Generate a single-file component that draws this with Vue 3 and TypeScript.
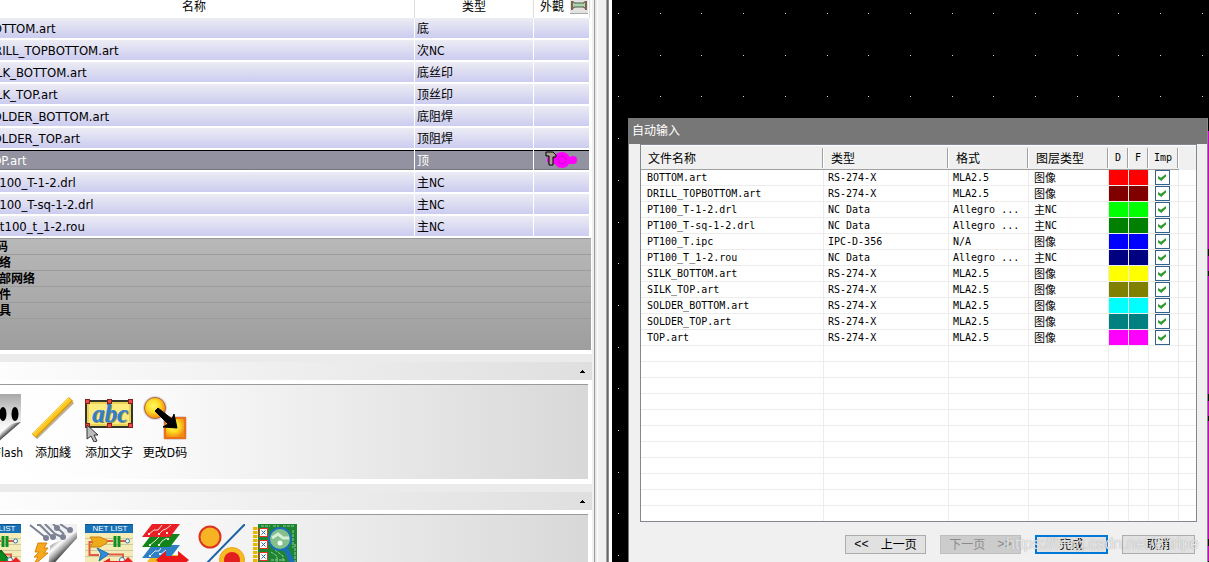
<script setup lang="ts">
interface Layer {
  name: string
  cjk: string
  latin?: string
  selected?: boolean
}

interface ImportFile {
  name: string
  type: string
  format: string
  cjk: string
  latin?: string
  color: string
}

const layers: Layer[] = [
  { name: 'BOTTOM.art', cjk: '底' },
  { name: 'DRILL_TOPBOTTOM.art', cjk: '次', latin: 'NC' },
  { name: 'SILK_BOTTOM.art', cjk: '底丝印' },
  { name: 'SILK_TOP.art', cjk: '顶丝印' },
  { name: 'SOLDER_BOTTOM.art', cjk: '底阻焊' },
  { name: 'SOLDER_TOP.art', cjk: '顶阻焊' },
  { name: 'TOP.art', cjk: '顶', selected: true },
  { name: 'PT100_T-1-2.drl', cjk: '主', latin: 'NC' },
  { name: 'PT100_T-sq-1-2.drl', cjk: '主', latin: 'NC' },
  { name: 'ppt100_t_1-2.rou', cjk: '主', latin: 'NC' },
]

const groups: string[] = ['D码', '网络', '内部网络', '元件', '工具']

const files: ImportFile[] = [
  { name: 'BOTTOM.art', type: 'RS-274-X', format: 'MLA2.5', cjk: '图像', color: '#ff0000' },
  { name: 'DRILL_TOPBOTTOM.art', type: 'RS-274-X', format: 'MLA2.5', cjk: '图像', color: '#800000' },
  { name: 'PT100_T-1-2.drl', type: 'NC Data', format: 'Allegro ...', cjk: '主', latin: 'NC', color: '#00ff00' },
  { name: 'PT100_T-sq-1-2.drl', type: 'NC Data', format: 'Allegro ...', cjk: '主', latin: 'NC', color: '#008000' },
  { name: 'PT100_T.ipc', type: 'IPC-D-356', format: 'N/A', cjk: '图像', color: '#0000ff' },
  { name: 'PT100_T_1-2.rou', type: 'NC Data', format: 'Allegro ...', cjk: '主', latin: 'NC', color: '#000080' },
  { name: 'SILK_BOTTOM.art', type: 'RS-274-X', format: 'MLA2.5', cjk: '图像', color: '#ffff00' },
  { name: 'SILK_TOP.art', type: 'RS-274-X', format: 'MLA2.5', cjk: '图像', color: '#808000' },
  { name: 'SOLDER_BOTTOM.art', type: 'RS-274-X', format: 'MLA2.5', cjk: '图像', color: '#00ffff' },
  { name: 'SOLDER_TOP.art', type: 'RS-274-X', format: 'MLA2.5', cjk: '图像', color: '#008080' },
  { name: 'TOP.art', type: 'RS-274-X', format: 'MLA2.5', cjk: '图像', color: '#ff00ff' },
]
const emptyRows = 11

const netIcons = [
  { id: 'net-a', fill: '#0a8a1c' },
  { id: 'net-b', fill: '#2d8be0' },
]

const dots: { x: number; y: number }[] = []
for (let row = 0; row < 30; row++) {
  for (let col = 0; col < 50; col++) {
    dots.push({ x: Math.round(6 + col * 41.7), y: Math.round(13 + row * 41.7) })
  }
}
</script>

<template>
  <main class="app">
    <section class="side">
      <div class="grid-clip">
        <table class="layers">
          <colgroup><col class="c-name" /><col class="c-kind" /><col class="c-look" /></colgroup>
          <thead>
            <tr>
              <th>名称</th>
              <th>类型</th>
              <th>
                <div class="look-head">
                  <span>外觀</span>
                  <button type="button" class="fit" aria-label="外觀">
                    <svg width="18" height="14" viewBox="0 0 18 14">
                      <path d="M2 2h2v1h10V2h2v6h-2V7H4v1H2z" fill="#a9d6a9" stroke="#4b5a4b" />
                      <path d="M1 1h2v9H1zM15 1h2v9h-2z" fill="#8d5a50" />
                    </svg>
                  </button>
                </div>
              </th>
            </tr>
          </thead>
          <tbody>
            <tr v-for="l in layers" :key="l.name" :class="{ selected: l.selected }">
              <td><div class="cell name">{{ l.name }}</div></td>
              <td><div class="cell kind">{{ l.cjk }}<span v-if="l.latin" class="latin">{{ l.latin }}</span></div></td>
              <td>
                <div class="cell look">
                  <svg v-if="l.selected" width="34" height="18" viewBox="0 0 34 18">
                    <circle cx="6" cy="9" r="4" fill="#f0f" />
                    <path d="M6 6h22v7H6z" fill="#f0f" />
                    <circle cx="28" cy="9" r="4" fill="#f0f" />
                    <circle cx="17" cy="9" r="8" fill="#f0f" />
                    <circle cx="17" cy="9" r="4" fill="none" stroke="#d800d8" />
                    <path d="M1 1h7l3 3v2H8v8H4V5H1z" fill="#a8a090" stroke="#000" />
                  </svg>
                </div>
              </td>
            </tr>
          </tbody>
        </table>
        <ul class="groups">
          <li v-for="g in groups" :key="g">{{ g }}</li>
        </ul>
      </div>

      <div class="band"></div>
      <button type="button" class="bar" aria-label="collapse tools">
        <svg width="5" height="3" viewBox="0 0 5 3"><path d="M2 0h1v1h1v1h1v1H0V2h1V1h1z" /></svg>
      </button>
      <div class="tools upper">
        <button type="button" class="tool">
          <svg class="icon" viewBox="0 0 48 48">
            <defs>
              <linearGradient id="sheet" x1="0" y1="0" x2="0" y2="1">
                <stop offset="0" stop-color="#a8a8a8" /><stop offset="0.65" stop-color="#f6f6f6" />
              </linearGradient>
              <linearGradient id="curl" x1="0" y1="0" x2="1" y2="1">
                <stop offset="0.3" stop-color="#fff" /><stop offset="0.5" stop-color="#444" />
                <stop offset="0.58" stop-color="#eee" /><stop offset="0.75" stop-color="#222" />
              </linearGradient>
            </defs>
            <path d="M0 0h48v28L34 36l-7 12H0z" fill="url(#sheet)" />
            <path d="M48 28C40 29 32 31 28 37l-2 10z" fill="url(#curl)" />
            <ellipse cx="30" cy="20" rx="3.500" ry="7" /><ellipse cx="42" cy="20" rx="3.500" ry="7" />
          </svg>
          <span>添加Flash</span>
        </button>
        <button type="button" class="tool">
          <svg class="icon" viewBox="0 0 48 48">
            <path d="M6 43L43 7" stroke="#b9b2a2" stroke-width="6" />
            <path d="M5 42L42 5" stroke="#dc9812" stroke-width="6" />
            <path d="M5 41L41 5" stroke="#ffc91f" stroke-width="4" />
            <path d="M4 40L40 4" stroke="#ffe05b" stroke-width="1" />
          </svg>
          <span>添加綫</span>
        </button>
        <button type="button" class="tool">
          <svg class="icon" viewBox="0 0 48 48">
            <rect x="1" y="7" width="46" height="26" fill="#fdec7d" stroke="#35342a" stroke-width="2" />
            <rect x="3" y="9" width="42" height="22" fill="none" stroke="#d6b72c" />
            <text x="8" y="29" class="abc shade" aria-hidden="true">abc</text>
            <text x="7" y="28" class="abc">abc</text>
            <g fill="#ef4646" stroke="#86201e">
              <rect x="0.500" y="5.500" width="4" height="4" /><rect x="22.500" y="5.500" width="4" height="4" /><rect x="43.500" y="5.500" width="4" height="4" />
              <rect x="0.500" y="29.500" width="4" height="4" /><rect x="22.500" y="29.500" width="4" height="4" /><rect x="43.500" y="29.500" width="4" height="4" />
            </g>
            <path d="M2 31l11 10H9l3 6-3 1-3-6-4 3z" fill="#bcbcbc" stroke="#333" />
          </svg>
          <span>添加文字</span>
        </button>
        <button type="button" class="tool">
          <svg class="icon" viewBox="0 0 48 48">
            <defs>
              <radialGradient id="gold" cx="0.420" cy="0.400" r="0.600">
                <stop offset="0" stop-color="#fff96a" /><stop offset="0.5" stop-color="#ffdc25" /><stop offset="1" stop-color="#f28a12" />
              </radialGradient>
            </defs>
            <circle cx="14" cy="14" r="12" fill="#b79bb4" opacity="0.4" />
            <rect x="22" y="22" width="24" height="24" rx="3" fill="#b79bb4" opacity="0.4" />
            <circle cx="14" cy="14" r="10.500" fill="url(#gold)" stroke="#b0683a" />
            <rect x="24" y="24" width="20" height="20" fill="url(#gold)" stroke="#e8731a" stroke-width="2" />
            <path d="M17 14l14 11 2-5 3 14-14-1 5-3L14 17z" stroke="#000" />
          </svg>
          <span>更改D码</span>
        </button>
      </div>

      <div class="band"></div>
      <button type="button" class="bar" aria-label="collapse more tools">
        <svg width="5" height="3" viewBox="0 0 5 3"><path d="M2 0h1v1h1v1h1v1H0V2h1V1h1z" /></svg>
      </button>
      <div class="tools lower">
        <template v-for="(n, i) in netIcons" :key="n.id">
          <button type="button" class="tool" :aria-label="n.id">
            <svg class="icon" viewBox="0 0 48 48">
              <rect width="48" height="48" fill="#f4ecb4" />
              <path d="M0 14.500h48M0 20.500h48M0 26.500h48M0 32.500h48M0 38.500h48" stroke="#cfc9a2" />
              <rect width="48" height="9" fill="#1672b8" />
              <path d="M0 0.500h48" stroke="#0c568e" />
              <text x="25" y="7" class="net-label">NET LIST</text>
              <path d="M8 18H4.500v13H14M20 17h8M35 17h6M24 30.500h14V38" fill="none" stroke="#e05a44" stroke-width="2" />
              <path d="M5 13h10l7 3v3l-7 4H5l3-5z" fill="#efaa1b" stroke="#c98310" />
              <path d="M30 12v11M34 12v11" stroke="#109020" stroke-width="3" />
              <circle cx="42.500" cy="17" r="2" fill="#fff" stroke="#2a7ab8" />
              <path d="M12 24l12 6-10 7 2-7z" :fill="n.fill" stroke="#236c9e" />
              <path v-if="i === 0" d="M22 38l6-12 10 12z" fill="#0a8a1c" stroke="#064d10" />
              <circle cx="37" cy="36" r="2.500" fill="#fff" stroke="#2a7ab8" />
              <path d="M18 38l7-4v3h14l4-4 5 5v8H20z" fill="#ed2222" />
            </svg>
          </button>
          <button v-if="i === 0" type="button" class="tool" aria-label="traces">
            <svg class="icon" viewBox="0 0 48 48">
              <defs>
                <linearGradient id="page" gradientUnits="userSpaceOnUse" x1="20" y1="18" x2="38" y2="38">
                  <stop offset="0" stop-color="#555" /><stop offset="0.3" stop-color="#fff" />
                  <stop offset="0.5" stop-color="#aaa" /><stop offset="0.8" stop-color="#0a0a0a" />
                </linearGradient>
              </defs>
              <path d="M8 0h40v16H22z" fill="#f1f1f1" />
              <path d="M48 8C36 15 26 18 21 22l-2 24L48 14z" fill="url(#page)" />
              <g fill="none" stroke="#7a8294" stroke-width="2">
                <path d="M1 1l15 12M8 1h3l12 12M16 0l10 10 7 3M24 0l11 10M31 0l9 6" />
              </g>
              <g fill="#7a8294">
                <circle cx="17" cy="14" r="3" /><circle cx="24" cy="13" r="3" /><circle cx="28" cy="4" r="3" /><circle cx="34" cy="13" r="3" /><circle cx="41" cy="6" r="3" />
              </g>
              <path d="M9 19h9l-3 5h4l-4 5h4L4 42l5-9H5l5-5H6z" fill="#f7a91d" stroke="#d98310" />
            </svg>
          </button>
        </template>
        <button type="button" class="tool" aria-label="layers">
          <svg class="icon" viewBox="0 0 48 48">
            <path d="M11 31h28L29 45H1z" fill="#f2b824" />
            <path d="M11 21h28L29 34H1z" fill="#2f7fc4" />
            <path d="M11 10h28L29 23H1z" fill="#128418" />
            <path d="M11 0h28L29 13H1z" fill="#e81f24" />
            <g fill="none" stroke="#fff" opacity="0.85">
              <path d="M8 10l5-4h4l4-5M18 10l4-4 3-1 5-4M9 21l5-4 4-4M18 21l3-4 5-3M9 32l5-5h4l2-3M20 30l5-4" />
            </g>
            <g fill="#fff" opacity="0.85">
              <rect x="7" y="9" width="2" height="2" /><rect x="17" y="9" width="2" height="2" /><rect x="25" y="8" width="2" height="2" />
              <rect x="8" y="20" width="2" height="2" /><rect x="17" y="20" width="2" height="2" /><rect x="26" y="14" width="2" height="2" />
              <rect x="8" y="31" width="2" height="2" /><rect x="18" y="29" width="2" height="2" />
            </g>
            <path d="M15 36l10-9v5h12v-5l11 9-11 9v-5H25v5z" fill="#ea1818" />
          </svg>
        </button>
        <button type="button" class="tool" aria-label="ratio">
          <svg class="icon" viewBox="0 0 48 48">
            <path d="M48 0L8 41" stroke="#1a63a4" stroke-width="2" />
            <circle cx="13" cy="13" r="10.500" fill="#f6b323" stroke="#dd3420" stroke-width="2" />
            <circle cx="35" cy="36" r="12.500" fill="#f9bb22" stroke="#eba21c" />
            <circle cx="35" cy="36" r="8" fill="#e11f1f" />
          </svg>
        </button>
        <button type="button" class="tool" aria-label="inspect board">
          <svg class="icon" viewBox="0 0 48 48">
            <path d="M2 3v40" stroke="#e8b800" stroke-width="5" stroke-dasharray="3 1" />
            <rect x="5" y="0" width="39" height="48" fill="#1d8531" />
            <path d="M8 2h9M20 2h6M30 2h12M18 28l6 4v12M22 26l8 6v12M40 6v18M42 20v22M18 36h14" fill="none" stroke="#98cfa1" stroke-dasharray="3 1" />
            <g fill="#fff" stroke="#df3426" stroke-width="1">
              <rect x="6.500" y="4.500" width="8" height="8" /><rect x="6.500" y="16.500" width="8" height="8" /><rect x="6.500" y="28.500" width="8" height="8" />
            </g>
            <path d="M8.500 6.500l4 4m0-4l-4 4M8.500 18.500l4 4m0-4l-4 4M8.500 30.500l4 4m0-4l-4 4" stroke="#1f6fa8" />
            <path d="M33 25l7 15" stroke="#1b6fb8" stroke-width="5" />
            <circle cx="27" cy="15" r="11" fill="#83c08c" stroke="#1b6fb8" stroke-width="2" />
            <path d="M19 14l6-4 5 4h6" fill="none" stroke="#d4eed6" stroke-width="3" />
            <circle cx="27" cy="19" r="2.500" fill="#f4fff4" />
          </svg>
        </button>
      </div>
    </section>

    <div class="splitter"><i class="s1"></i><i class="s2"></i><i class="s3"></i></div>

    <section class="canvas">
      <svg class="dots" width="100%" height="100%">
        <rect v-for="(d, i) in dots" :key="i" :x="d.x" :y="d.y" width="1" height="1" fill="#d8d8d8" />
      </svg>
      <div class="outline"></div>

      <div class="dialog" role="dialog" aria-label="自动输入">
        <div class="title">自动输入</div>
        <div class="list">
          <table class="files">
            <colgroup>
              <col /><col class="w-type" /><col class="w-mid" /><col class="w-mid" /><col class="w-sw" /><col class="w-sw" /><col class="w-imp" /><col class="w-end" />
            </colgroup>
            <thead>
              <tr>
                <th>文件名称</th><th>类型</th><th>格式</th><th>图层类型</th>
                <th class="mono">D</th><th class="mono">F</th><th class="mono">Imp</th><th class="end"></th>
              </tr>
            </thead>
            <tbody>
              <tr v-for="f in files" :key="f.name">
                <td>{{ f.name }}</td>
                <td>{{ f.type }}</td>
                <td>{{ f.format }}</td>
                <td><div class="sort"><span class="cjk">{{ f.cjk }}</span><span>{{ f.latin }}</span></div></td>
                <td class="sw"><div class="swatch" :style="{ background: f.color }"></div></td>
                <td class="sw"><div class="swatch" :style="{ background: f.color }"></div></td>
                <td class="imp"><input type="checkbox" checked :aria-label="f.name" /></td>
                <td></td>
              </tr>
              <tr v-for="n in emptyRows" :key="n">
                <td v-for="c in 8" :key="c"></td>
              </tr>
            </tbody>
          </table>
        </div>
        <div class="actions">
          <button type="button" class="wide"><span class="chev">&lt;&lt;</span>上一页</button>
          <button type="button" class="wide" disabled>下一页<span class="chev">&gt;&gt;</span></button>
          <button type="button" class="primary">完成</button>
          <button type="button">取消</button>
        </div>
      </div>
    </section>
    <div class="watermark">https://blog.csdn.net/Bitripe</div>
  </main>
</template>

<style>
html, body { margin: 0; overflow: hidden; }
</style>

<style scoped>
* { box-sizing: border-box; }
.app {
  position: relative;
  display: flex;
  height: 100vh;
  overflow: hidden;
  background: #fff;
  color: #000;
  font: 12px/16px "DejaVu Sans Condensed", "Noto Sans CJK SC", sans-serif;
}
button { font: inherit; color: inherit; padding: 0; border: 0; background: none; }
table { border-collapse: separate; border-spacing: 0; table-layout: fixed; }
th, td { padding: 0; font-weight: normal; text-align: left; }

.side { flex: 0 0 592px; display: flex; flex-direction: column; overflow: hidden; }
.grid-clip { flex: none; overflow: hidden; padding-right: 1px; }
.layers { width: 616px; margin-left: -26px; }
.c-name { width: 441px; }
.c-kind { width: 119px; }
.layers th { height: 18px; vertical-align: top; text-align: center; line-height: 14px; border-right: 1px solid #dedede; }
.look-head { display: flex; justify-content: space-between; padding: 0 1px 0 6px; }
.fit { width: 18px; height: 14px; background: #e2e2e2; border-bottom: 1px solid #a8a8a8; }
.fit svg { display: block; }
.layers td { height: 22px; vertical-align: top; border-right: 1px solid #fff; }
.cell { height: 20px; line-height: 22px; background: linear-gradient(#ececf4, #ccccf0); white-space: nowrap; overflow: hidden; }
.name { padding-left: 11px; font-size: 13px; }
.kind { padding-left: 2px; }
.look { padding: 1px 0 0 11px; }
.look svg { display: block; }
.selected .cell { background: #9292a0; border-top: 1px solid #000; border-bottom: 1px solid #77777f; color: #fff; line-height: 20px; }
.selected .look { padding-top: 0; }
.groups {
  list-style: none;
  margin: 0;
  padding: 0;
  height: 112px;
  border-top: 1px solid #999;
  background: linear-gradient(#b8b8b8, #9e9e9e);
}
.groups li { height: 16px; margin-left: -13px; border-bottom: 1px solid #9c9c9c; font-weight: bold; line-height: 16px; }
.band { flex: none; height: 8px; margin-top: 4px; background: #ebebeb; }
.bar {
  flex: none;
  display: flex;
  align-items: center;
  justify-content: flex-end;
  height: 18px;
  padding-right: 7px;
  background: linear-gradient(90deg, #fdfdfd, #dfdfdf);
}
.tools {
  flex: none;
  display: flex;
  align-items: flex-start;
  margin: 4px 4px 0 0;
  padding-top: 9px;
  border-top: 1px solid #9a9a9a;
  background: linear-gradient(90deg, #fff, #fcfcfc 22%, #d8d8d8);
  overflow: hidden;
  box-sizing: content-box;
}
.upper { height: 85px; margin-bottom: 1px; }
.lower { height: 60px; }
.tool { flex: none; width: 56px; display: flex; flex-direction: column; align-items: center; white-space: nowrap; }
.tool:first-child { margin-left: -31px; }
.tool span { line-height: 22px; }
.icon { width: 48px; height: 48px; display: block; }
.abc { font: italic bold 25px "Liberation Serif", serif; fill: #2f7fd0; }
.shade { fill: #8b8b6a; }
.net-label { font: 8px "Liberation Sans", sans-serif; fill: #fff; text-anchor: middle; }

.splitter { flex: 0 0 20px; display: flex; align-items: stretch; background: #f0f0f0; }
.s1 { width: 6px; background: linear-gradient(90deg, #f0f0f0 2px, #9c9c9c 2px 3px, #e8e8e8 3px 5px, #fff 5px); }
.s2 { flex: 1; }
.s3 { width: 6px; background: linear-gradient(90deg, #a0a0a0 1px, #696969 1px 2px, #8c8c8c 2px 3px, #fff 3px); }

.canvas { flex: 1; position: relative; background: #000; overflow: hidden; }
.dots { display: block; }
.outline {
  position: absolute;
  top: 131px;
  right: 0;
  bottom: 0;
  width: 1px;
  background: repeating-linear-gradient(#d000d0 0 118px, #101010 118px 125px, #d000d0 125px 140px, #101010 140px 145px);
}
.dialog {
  position: absolute;
  top: 118px;
  left: 16px;
  right: 1px;
  bottom: 0;
  display: flex;
  flex-direction: column;
  background: #f0f0f0;
  border-left: 1px solid #777;
  border-right: 1px solid #888;
}
.title { height: 26px; padding-left: 3px; line-height: 26px; background: #777; color: #fff; }
.list { margin: 0 10px 0 11px; border: 1px solid #828790; background: #fff; padding-top: 1px; }
.files { width: 100%; font: 10px/15px "DejaVu Sans Mono", "Noto Sans CJK SC", monospace; }
.w-type { width: 125px; }
.w-mid { width: 80px; }
.w-sw { width: 20px; }
.w-imp { width: 30px; }
.w-end { width: 17px; }
.files th {
  height: 24px;
  padding-left: 7px;
  font-size: 12px;
  font-family: "Noto Sans CJK SC", sans-serif;
  line-height: 22px;
  border-bottom: 1px solid #a0a0a0;
  background:
    linear-gradient(#a0a0a0, #a0a0a0) right 1px top 2px / 1px 20px no-repeat,
    linear-gradient(#fff, #fff) right 0 top 2px / 1px 20px no-repeat,
    #f0f0f0;
}
.files th.mono { padding: 0 2px 0 0; text-align: center; font: 10px/22px "DejaVu Sans Mono", monospace; }
.files th.end { background: #f0f0f0; border-bottom-color: #f0f0f0; }
.files td {
  height: 16px;
  padding-left: 6px;
  border-right: 1px solid #ececec;
  border-bottom: 1px solid #ececec;
  vertical-align: top;
  white-space: nowrap;
  overflow: hidden;
}
.files tr:last-child td { border-bottom: 0; height: 15px; }
.files td:last-child { border-right: 0; }
.files td:nth-child(3), .files td:nth-child(2) { padding-left: 4px; }
.files td:nth-child(4) { padding-left: 5px; }
.sort { display: flex; height: 15px; }
.cjk { font: 11px/15px "Noto Sans CJK SC", sans-serif; }
.files td.sw { padding: 0; }
.swatch { height: 15px; }
.files input {
  appearance: none;
  display: block;
  width: 15px;
  height: 15px;
  margin: 0;
  padding: 3px 0 0 2px;
  border: 1px solid #33628f;
  background: #fff;
}
.files input:checked::before {
  content: "";
  display: block;
  width: 8px;
  height: 7px;
  background: #2f9a32;
  clip-path: polygon(0 28%, 36% 55%, 100% 0, 100% 36%, 40% 100%, 0 64%);
}
.actions { display: flex; justify-content: flex-end; gap: 14px; padding: 13px 12px 0 0; }
.actions button {
  display: flex;
  align-items: center;
  justify-content: center;
  width: 73px;
  height: 19px;
  border: 1px solid #adadad;
  background: #e1e1e1;
}
.actions .wide { width: 81px; gap: 12px; }
.actions button:disabled { background: #ccc; border-color: #bfbfbf; color: #8b8b8b; }
.actions .primary { border: 2px solid #0078d7; }
.chev { font: 12px/16px "Liberation Mono", monospace; }
.watermark {
  position: absolute;
  right: 10px;
  bottom: 7px;
  font: 16px/22px "Liberation Sans", sans-serif;
  color: rgba(255, 255, 255, 0.75);
  text-shadow: 0 0 1px rgba(90, 90, 90, 0.6);
  pointer-events: none;
}
</style>
